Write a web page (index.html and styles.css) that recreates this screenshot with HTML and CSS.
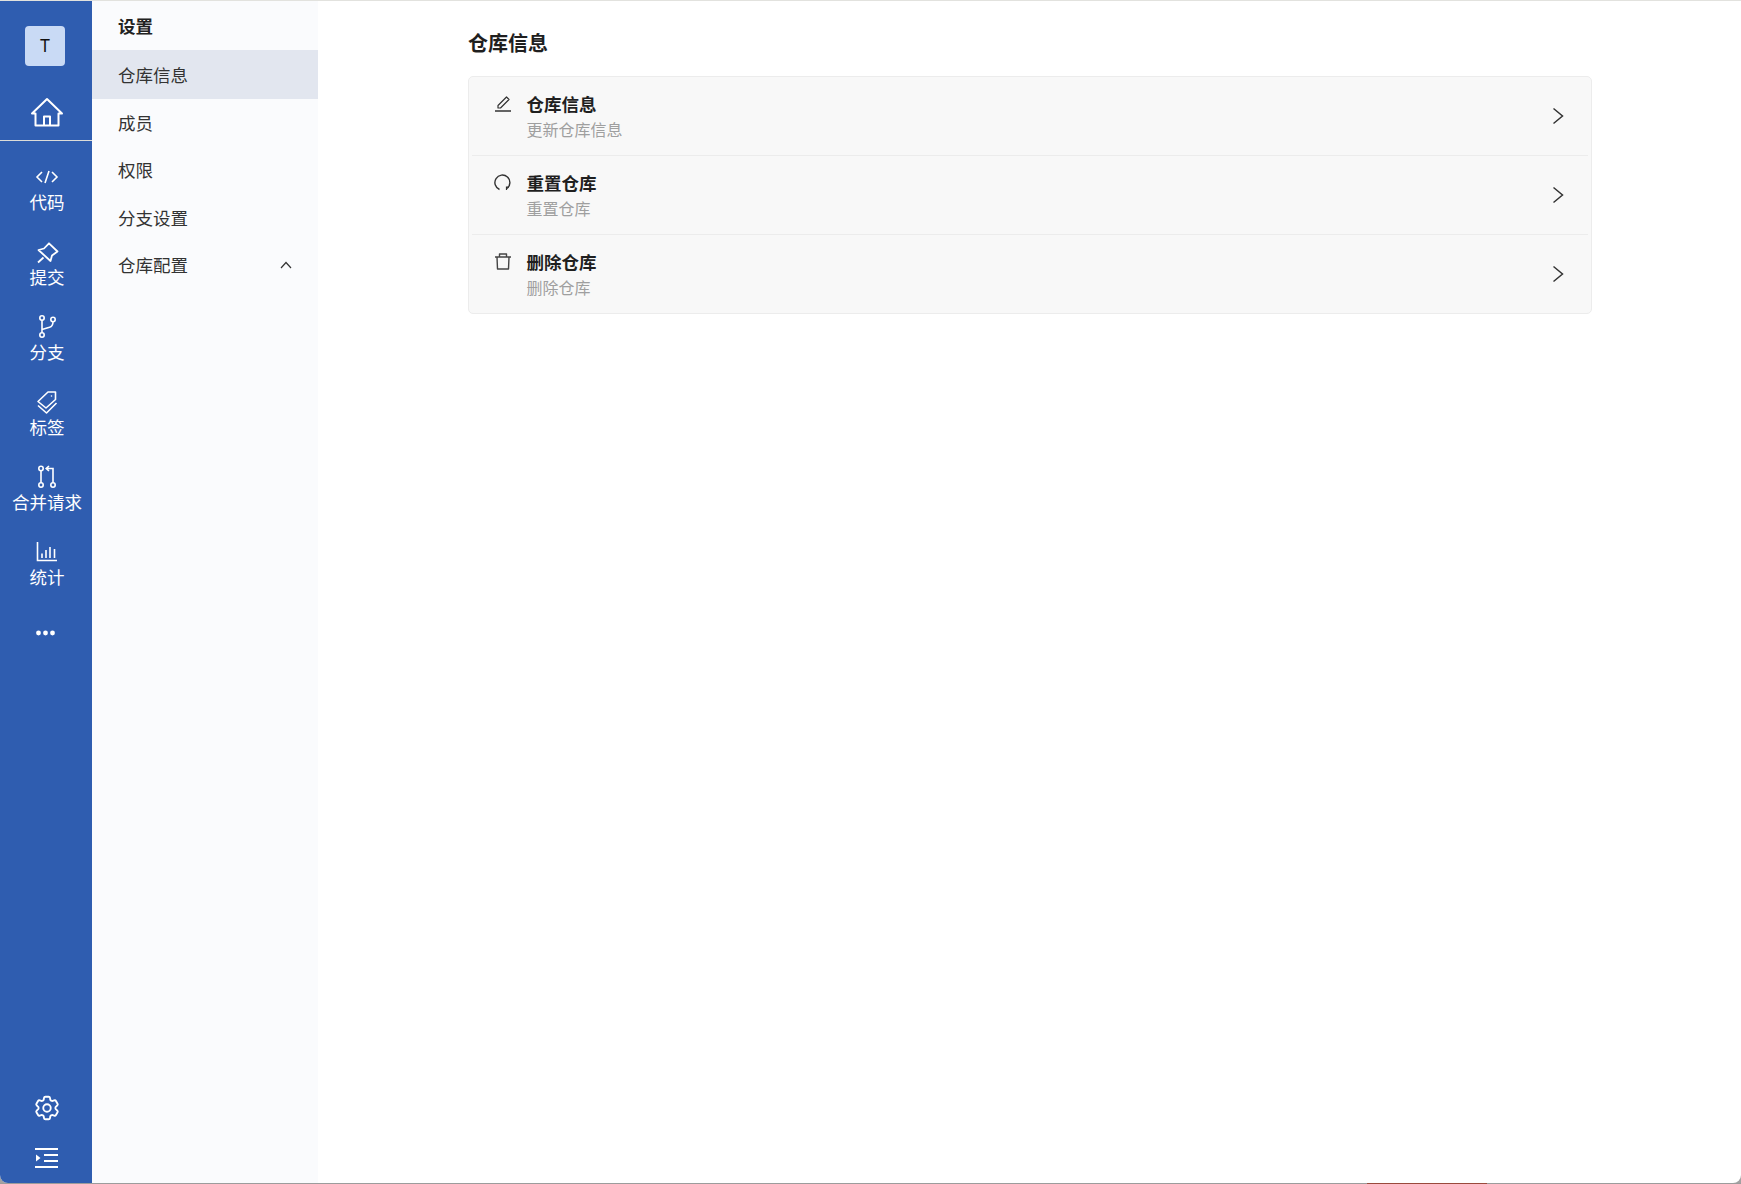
FILE: index.html
```html
<!DOCTYPE html>
<html lang="zh-CN">
<head>
<meta charset="utf-8">
<title>仓库信息</title>
<link rel="stylesheet" href="styles.css">
</head>
<body>
<div class="topline"></div>
<div class="window">
  <aside class="rail">
    <div class="avatar">T</div>
    <a class="home">
      <svg width="34" height="32" viewBox="0 0 34 32" fill="none" stroke="#fff" stroke-width="2" stroke-linejoin="round"><path d="M2 16.5 17 2l15 14.5h-3.500V28.500h-23V16.500Z"/><path d="M14 28.500V19.500h6v9"/></svg>
    </a>
    <div class="rail-divider"></div>
    <nav class="rail-nav">
      <a class="rail-item">
        <span class="rail-icon"><svg width="24" height="14" viewBox="0 0 24 14" fill="none" stroke="#fff" stroke-width="1.600"><path d="M7 2 2 7l5 5M17 2l5 5-5 5M14 1l-4 12"/></svg></span>
        <span>代码</span>
      </a>
      <a class="rail-item">
        <span class="rail-icon"><svg width="24" height="24" viewBox="0 0 24 24" fill="none" stroke="#fff" stroke-width="1.800" stroke-linejoin="round"><path d="m14 3.300 8.500 8.200-5.500 4-1.500 5.500L3.500 10l5.500-1.500 5-5.200Z"/><path d="m8.500 17.500-5.500 5"/></svg></span>
        <span>提交</span>
      </a>
      <a class="rail-item">
        <span class="rail-icon"><svg width="24" height="26" viewBox="0 0 24 26" fill="none" stroke="#fff" stroke-width="1.600"><circle cx="7" cy="4" r="2.200"/><circle cx="7" cy="21" r="2.200"/><circle cx="18" cy="5.500" r="2.200"/><path d="M7 6.200v12.600M18 7.700c0 3-1 4.800-3.500 5.600L7 15.500"/></svg></span>
        <span>分支</span>
      </a>
      <a class="rail-item">
        <span class="rail-icon"><svg width="24" height="26" viewBox="0 0 24 26" fill="none" stroke="#fff" stroke-width="1.600" stroke-linejoin="round"><path d="m3 12.500 10-9.500h7.500v7.500L11 19 3 12.500Z"/><path d="m3 16.500 8.500 7.500 10-10"/><circle cx="16.500" cy="7" r=".8" fill="#fff" stroke="none"/></svg></span>
        <span>标签</span>
      </a>
      <a class="rail-item">
        <span class="rail-icon"><svg width="24" height="26" viewBox="0 0 24 26" fill="none" stroke="#fff" stroke-width="1.600"><circle cx="6" cy="4.500" r="2.200"/><circle cx="6" cy="21" r="2.200"/><circle cx="18" cy="21" r="2.200"/><path d="M6 6.700v12.100M18 18.800V4.500h-6.500M14 2l-2.800 2.500L14 7"/></svg></span>
        <span>合并请求</span>
      </a>
      <a class="rail-item">
        <span class="rail-icon"><svg width="24" height="22" viewBox="0 0 24 22" fill="none" stroke="#fff" stroke-width="1.600"><path d="M2.500 1v18.500H22"/><path d="M7 12.500v4.500M11 9v8M15 6v11M19.500 8v9"/></svg></span>
        <span>统计</span>
      </a>
      <a class="rail-more">
        <svg width="22" height="6" viewBox="0 0 22 6" fill="#fff"><circle cx="3.500" cy="3" r="2.400"/><circle cx="10.500" cy="3" r="2.400"/><circle cx="17.500" cy="3" r="2.400"/></svg>
      </a>
    </nav>
    <div class="rail-bottom">
      <a class="rail-tool">
        <svg width="30" height="30" viewBox="0 0 24 24" fill="none" stroke="#fff" stroke-width="1.500" stroke-linejoin="round"><path d="M9.594 3.940c.09-.542.56-.94 1.110-.94h2.593c.55 0 1.020.398 1.110.94l.213 1.281c.063.374.313.686.645.870.074.040.147.083.220.127.325.196.720.257 1.075.124l1.217-.456a1.125 1.125 0 0 1 1.370.490l1.296 2.247a1.125 1.125 0 0 1-.260 1.431l-1.003.827c-.293.241-.438.613-.430.992a7.723 7.723 0 0 1 0 .255c-.008.378.137.750.430.991l1.004.827c.424.350.534.955.260 1.430l-1.298 2.247a1.125 1.125 0 0 1-1.369.491l-1.217-.456c-.355-.133-.750-.072-1.076.124a6.470 6.470 0 0 1-.220.128c-.331.183-.581.495-.644.869l-.213 1.281c-.090.543-.560.940-1.110.940h-2.594c-.550 0-1.019-.398-1.110-.940l-.213-1.281c-.062-.374-.312-.686-.644-.870a6.520 6.520 0 0 1-.220-.127c-.325-.196-.720-.257-1.076-.124l-1.217.456a1.125 1.125 0 0 1-1.369-.490l-1.297-2.247a1.125 1.125 0 0 1 .260-1.431l1.004-.827c.292-.240.437-.613.430-.991a6.932 6.932 0 0 1 0-.255c.007-.380-.138-.751-.430-.992l-1.004-.827a1.125 1.125 0 0 1-.260-1.430l1.297-2.247a1.125 1.125 0 0 1 1.370-.491l1.216.456c.356.133.751.072 1.076-.124.072-.044.146-.086.220-.128.332-.183.582-.495.644-.869l.214-1.280Z"/><circle cx="12" cy="12" r="3"/></svg>
      </a>
      <a class="rail-tool">
        <svg width="24" height="20" viewBox="0 0 24 20" fill="#fff"><rect x="0" y="0" width="23" height="2"/><rect x="9" y="6" width="14" height="2"/><rect x="9" y="12" width="14" height="2"/><rect x="0" y="18" width="23" height="2"/><path d="M1 6.500 5.500 10 1 13.500Z"/></svg>
      </a>
    </div>
  </aside>

  <aside class="subnav">
    <div class="subnav-title">设置</div>
    <a class="subnav-item active">仓库信息</a>
    <a class="subnav-item">成员</a>
    <a class="subnav-item">权限</a>
    <a class="subnav-item">分支设置</a>
    <a class="subnav-item">仓库配置
      <svg class="caret" width="12" height="8" viewBox="0 0 12 8" fill="none" stroke="#333" stroke-width="1.200"><path d="m1 7 5-5.500L11 7"/></svg>
    </a>
  </aside>

  <main class="main">
    <h1 class="page-title">仓库信息</h1>
    <section class="card">
      <a class="row">
        <svg class="row-icon" width="20" height="20" viewBox="0 0 20 20" fill="none" stroke="#333" stroke-width="1.200" stroke-linejoin="round"><path d="M5 12.500 13.500 4l2.500 2.500-8.500 8.500H5v-2.500Z"/><path d="M2 18h16" stroke-width="1.300"/></svg>
        <div class="row-text">
          <div class="row-title">仓库信息</div>
          <div class="row-sub">更新仓库信息</div>
        </div>
        <svg class="chev" width="20" height="20" viewBox="0 0 20 20" fill="none" stroke="#333" stroke-width="1.500"><path d="m5.500 2.500 9 7.500-9 7.500"/></svg>
      </a>
      <a class="row">
        <svg class="row-icon" width="20" height="20" viewBox="0 0 20 20" fill="none" stroke="#333" stroke-width="1.400"><path d="M6.500 17.500A7.500 7.500 0 1 1 14 16.500"/><path d="M16 15h-2.500v3" stroke-width="1.200"/></svg>
        <div class="row-text">
          <div class="row-title">重置仓库</div>
          <div class="row-sub">重置仓库</div>
        </div>
        <svg class="chev" width="20" height="20" viewBox="0 0 20 20" fill="none" stroke="#333" stroke-width="1.500"><path d="m5.500 2.500 9 7.500-9 7.500"/></svg>
      </a>
      <a class="row">
        <svg class="row-icon" width="20" height="20" viewBox="0 0 20 20" fill="none" stroke="#444" stroke-width="1.400" stroke-linejoin="round"><path d="M2 6h16M6.500 6V3h7v3M4 6l.500 12h11l.500-12"/></svg>
        <div class="row-text">
          <div class="row-title">删除仓库</div>
          <div class="row-sub">删除仓库</div>
        </div>
        <svg class="chev" width="20" height="20" viewBox="0 0 20 20" fill="none" stroke="#333" stroke-width="1.500"><path d="m5.500 2.500 9 7.500-9 7.500"/></svg>
      </a>
    </section>
  </main>
</div>
<div class="bottomline"><span class="seg-a"></span><span class="seg-red"></span><span class="seg-b"></span></div>
</body>
</html>
```

FILE: styles.css
```css
* { box-sizing: border-box; }
html, body { height: 100%; }
body {
  margin: 0;
  display: flex;
  flex-direction: column;
  background: #a2a2a2;
  font-family: "Noto Sans CJK SC", "Noto Sans", sans-serif;
  color: #222;
  overflow: hidden;
}
a { color: inherit; text-decoration: none; }
svg { display: block; }

.topline { height: 1px; flex: none; background: #e2e2de; }
.bottomline { height: 1px; flex: none; display: flex; }
.seg-a { width: 1367px; background: #9c9c9c; }
.seg-red { width: 120px; background: #9a4a3c; }
.seg-b { flex: 1; background: #9c9c9c; }

.window {
  flex: 1;
  min-height: 0;
  display: flex;
  background: #fff;
  border-radius: 0 0 8px 8px;
  overflow: hidden;
}

/* Left rail */
.rail {
  width: 92px;
  flex: none;
  display: flex;
  flex-direction: column;
  align-items: center;
  background: #2f5db0;
  color: #fff;
}
.avatar {
  width: 40px;
  height: 40px;
  margin: 25px 0 0 -2px;
  display: flex;
  align-items: center;
  justify-content: center;
  border-radius: 4px;
  background: #c9daf5;
  color: #111;
  font: 17px "Inter", "Noto Sans", sans-serif;
}
.home { margin-top: 31px; margin-left: 1px; height: 32px; }
.rail-divider { width: 100%; height: 1px; margin-top: 11px; background: #dcdcd8; }
.rail-nav { width: 100%; display: flex; flex-direction: column; margin-top: 10px; padding-left: 2px; }
.rail-item {
  height: 75px;
  padding-top: 12px;
  display: flex;
  flex-direction: column;
  align-items: center;
  font-size: 17.500px;
  line-height: 25px;
  white-space: nowrap;
}
.rail-icon { height: 26px; padding-top: 2px; display: flex; align-items: center; justify-content: center; }
.rail-more { height: 63px; display: flex; align-items: center; justify-content: center; margin-left: -3px; }
.rail-bottom { margin-top: auto; width: 100%; display: flex; flex-direction: column; align-items: center; padding-left: 1px; }
.rail-tool { height: 50px; width: 100%; display: flex; align-items: center; justify-content: center; }

/* Secondary nav */
.subnav {
  width: 226px;
  flex: none;
  background: #fafbfd;
  font-size: 17.500px;
  color: #333;
}
.subnav-title {
  height: 49px;
  padding-left: 26px;
  padding-bottom: 1px;
  display: flex;
  align-items: center;
  font-size: 17.500px;
  font-weight: 700;
  color: #222;
}
.subnav-item {
  height: 47.500px;
  padding: 0 26px 1px;
  display: flex;
  align-items: center;
  justify-content: space-between;
}
.subnav-item.active { height: 49px; padding-bottom: 0; background: #e2e6ef; }
.caret { margin-right: 0; }

/* Main */
.main { flex: 1; min-width: 0; padding: 0 149px 0 150px; }
.page-title {
  margin: 0;
  height: 75px;
  padding-top: 7px;
  display: flex;
  align-items: center;
  font-size: 20px;
  font-weight: 700;
  color: #1f1f1f;
}
.card {
  padding: 0 3px;
  background: #f8f8f8;
  border: 1px solid #ececec;
  border-radius: 5px;
}
.row {
  height: 79px;
  padding: 14px 20px 0 21px;
  display: flex;
  align-items: flex-start;
  border-bottom: 1px solid #ececec;
}
.row:last-child { height: 78px; border-bottom: 0; }
.row-icon { margin-top: 2px; flex: none; }
.row-text { margin-left: 13.500px; flex: 1; }
.row-title { font-size: 17.500px; line-height: 25px; font-weight: 700; color: #1f1f1f; }
.row-sub { margin-top: 1px; font-size: 16px; line-height: 25px; color: #9f9f9f; }
.chev { flex: none; align-self: center; margin-top: -14px; }
```
